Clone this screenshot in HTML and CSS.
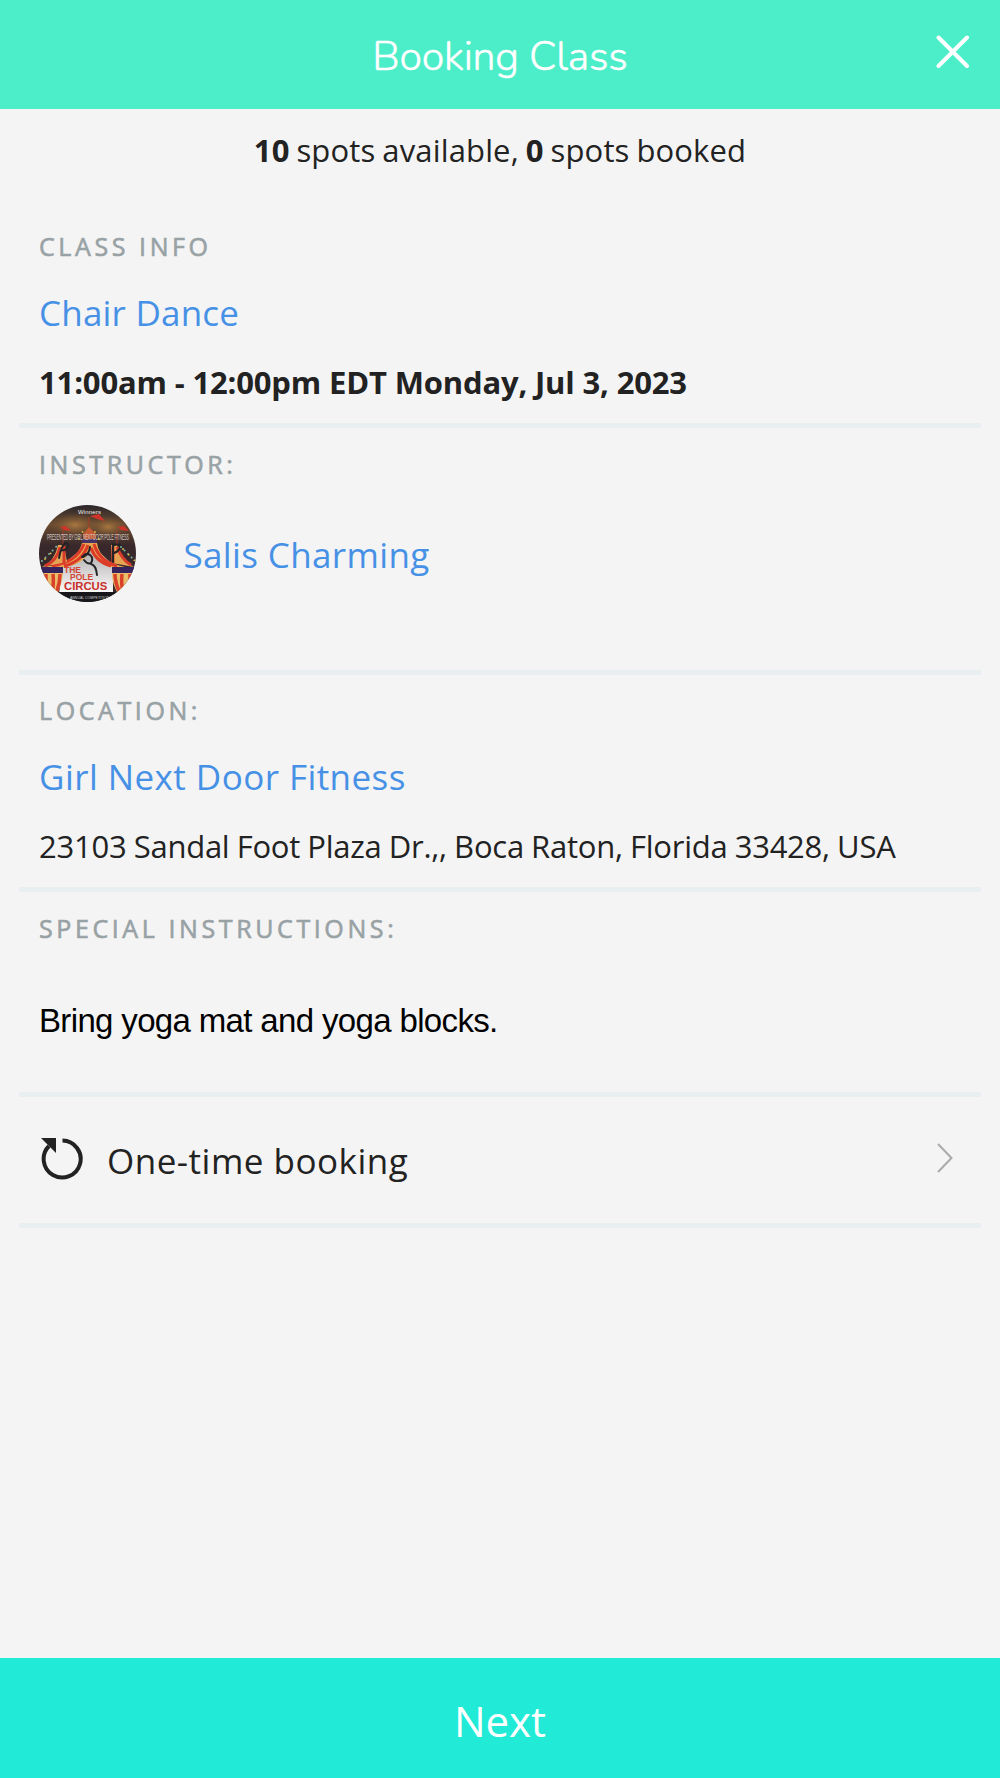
FILE: index.html
```html
<!DOCTYPE html>
<html lang="en">
<head>
<meta charset="utf-8">
<title>Booking Class</title>
<link rel="stylesheet" href="styles.css">
</head>
<body>
<div class="screen">
  <header class="topbar">
    <h1 class="title">Booking Class</h1>
    <svg class="close" viewBox="0 0 34 34"><path d="M2.500 2.500 31 31M31 2.500 2.500 31"/></svg>
  </header>
  <main class="content">
    <p class="spots"><b>10</b> spots available, <b>0</b> spots booked</p>
    <section class="section">
      <h2 class="label">CLASS INFO</h2>
      <a class="link chair">Chair Dance</a>
      <p class="date">11:00am - 12:00pm EDT Monday, Jul 3, 2023</p>
    </section>
    <section class="section instructor">
      <h2 class="label">INSTRUCTOR:</h2>
      <div class="person">
        <svg class="avatar" viewBox="0 0 97 97">
          <defs>
            <clipPath id="round"><circle cx="48.500" cy="48.500" r="48.500"/></clipPath>
            <linearGradient id="sky" x2="0" y2="1"><stop stop-color="#29252b"/><stop offset=".2" stop-color="#6b4c30"/><stop offset=".42" stop-color="#38282b"/></linearGradient>
            <radialGradient id="glow"><stop stop-color="#a8773f"/><stop offset="1" stop-color="#7b5535" stop-opacity="0"/></radialGradient>
            <linearGradient id="floor" x2="0" y2="1"><stop stop-color="#aaa5a6"/><stop offset="1" stop-color="#fff"/></linearGradient>
          </defs>
          <g clip-path="url(#round)">
            <path fill="url(#sky)" d="M0 0h97v97H0z"/>
            <ellipse cx="36" cy="20" rx="25" ry="12" fill="url(#glow)"/>
            <ellipse cx="69" cy="22" rx="20" ry="11" fill="url(#glow)"/>
            <path fill="#cf3329" d="m51 11 9-2 6 7-8-2zM21 22l6-1 5 5-7-1zM79 22l6-1 5 5-8-1z"/>
            <path stroke="#a33c2a" d="M50 12v12M24 25v14M78 25v14"/>
            <path fill="#c65a32" d="m44 29 6-7 7 7-1 9H45z"/>
            <path fill="#463264" d="M43 34h15v5H43z"/>
            <path fill="url(#floor)" d="M23 60 45 42h10l19 18v30H20z"/>
            <path fill="#e8a64e" d="M43 38h15q3 19 28 24H71Q58 58 51 46 44 59 27 62H4q34-4 39-24z"/>
            <path fill="none" stroke="#dc3b2a" stroke-width="3" d="M45 39Q38 57 13 61M49 40Q43 57 25 61M55 39q5 17 23 22M52 43q5 14 20 18"/>
            <path fill="#e5a453" d="M19 40h6l3 17L3 62q13-6 16-22zM72 40h6q4 16 17 22l-22-4z"/>
            <path fill="none" stroke="#d63b2c" stroke-width="3" d="M21 42Q18 56 6 61M25 41v17M74 41v17M78 42q5 13 14 18"/>
            <path fill="#37245f" d="M0 62h24v7H0zM73 62h24v7H73z"/>
            <path fill="#e9bd69" d="M4 68h20q-1 13-7 22H4zM73 68h20v22H80q-7-10-7-22z"/>
            <path fill="none" stroke="#d9412b" stroke-width="3.500" d="M7 69v20M14 69q1 9-1 20M21 69q0 8-3 17M76 69q0 8 4 17M83 69q-1 9 1 20M91 69v20"/>
            <path fill="none" stroke="#252326" stroke-width="2" stroke-linecap="round" d="M20 53q2-11 6-15 4 0 3 4-2 4-7 3M74 39v18M75 40q7-2 6 3-2 4-6 5"/>
            <path fill="none" stroke="#242226" stroke-width="2" stroke-linecap="round" d="M51 42q-1 8-7 10M43 52q4-5 8-2 4 3 1 8-3 2-7-3M52 59q5 1 6 11"/>
            <path fill="none" stroke="#72b7a9" stroke-width="2" stroke-linecap="round" stroke-dasharray="0 5" d="M3 56 19 40M82 42l14 14"/>
            <path fill="none" stroke="#dfc342" stroke-width="1.800" stroke-linecap="round" stroke-dasharray="0 8" d="M6 54 17 43M84 44l12 12M40 34l5-10M56 27l5 9"/>
            <text class="poster-small" x="39" y="9" textLength="23">Winners</text>
            <text class="poster-band" transform="translate(8 35) scale(1 2.300)" textLength="82">PRESENTED BY GIRL NEXT DOOR POLE FITNESS</text>
            <text class="poster-the" x="25" y="68">THE</text>
            <text class="poster-the" x="31" y="75">POLE</text>
            <text class="poster-circus" x="25" y="85">CIRCUS</text>
            <path fill="#17161a" d="M0 87h97v10H0z"/>
            <text class="poster-foot" x="31" y="93.500">ANNUAL COMPETITION</text>
          </g>
        </svg>
        <a class="link salis">Salis Charming</a>
      </div>
    </section>
    <section class="section location">
      <h2 class="label">LOCATION:</h2>
      <a class="link girl">Girl Next Door Fitness</a>
      <p class="address">23103 Sandal Foot Plaza Dr.,, Boca Raton, Florida 33428, USA</p>
    </section>
    <section class="section special">
      <h2 class="label">SPECIAL INSTRUCTIONS:</h2>
      <p class="note">Bring yoga mat and yoga blocks.</p>
    </section>
    <section class="section recurrence">
      <svg class="repeat" viewBox="0 0 42 42"><path class="ring" d="M21.500 2.500A18.500 18.500 0 1 1 8 8"/><path class="head" d="M0 0h15v15z"/></svg>
      <span class="once">One-time booking</span>
      <svg class="chevron" viewBox="0 0 16 30"><path d="M1 1 14.500 15 1 29"/></svg>
    </section>
  </main>
  <button class="next">Next</button>
</div>
</body>
</html>
```
FILE: styles.css
```css
* { box-sizing: border-box; }
body, h1, h2, p { margin: 0; }
body { background: #f4f4f4; font-family: "Open Sans", sans-serif; color: #222; }
.screen { display: flex; flex-direction: column; height: 1778px; }
.topbar { height: 109px; background: #4beec8; display: grid; grid-template-columns: 100px 1fr 100px; align-items: start; flex: none; }
.title { grid-column: 2; text-align: center; color: #fff; font: 300 41px/60px Nunito, "Open Sans", sans-serif; padding-top: 27px; letter-spacing: -.2px; -webkit-text-stroke: .5px #fff; }
.close { width: 34px; height: 34px; margin: 35px 0 0 36px; fill: none; stroke: #fff; stroke-width: 4; stroke-linecap: round; }
.content { flex: 1; padding: 0 19px; }
.spots { height: 83px; line-height: 83px; font-size: 31px; text-align: center; letter-spacing: .15px; word-spacing: -1.3px; white-space: nowrap; }
.section { border-bottom: 5px solid #e9eff1; padding: 17px 20px 0; height: 236px; white-space: nowrap; }
.section:first-of-type { padding-top: 35px; }
.label { font-size: 25px; font-weight: 400; line-height: 38px; margin-bottom: 2px; color: #98a2a5; letter-spacing: 3.6px; -webkit-text-stroke: .6px #98a2a5; }
.link { display: block; color: #4691e6; font-size: 35px; line-height: 60px; padding-top: 16px; }
.chair { letter-spacing: .2px; }
.salis { letter-spacing: .36px; }
.girl { letter-spacing: .44px; }
.date, .address { font-size: 31px; line-height: 50px; padding-top: 14px; }
.date { font-weight: 700; letter-spacing: -.16px; }
.address { letter-spacing: -.24px; word-spacing: -.6px; }
.person { display: flex; margin-top: 22px; height: 97px; align-items: center; gap: 48px; }
.person .link { padding: 2px 0 0; }
.avatar { width: 97px; height: 97px; margin-left: -.5px; font-family: "Liberation Sans", sans-serif; }
.poster-small { font-size: 6px; fill: #eee; }
.poster-band { font-size: 3.7px; fill: #d0c9c5; }
.poster-the { font-size: 8.5px; font-weight: 700; fill: #d34635; }
.poster-circus { font-size: 11.3px; font-weight: 700; fill: #c72f2b; }
.poster-foot { font-size: 3.5px; fill: #ccc; }
.instructor { height: 247px; }
.location { height: 217px; padding-top: 16px; }
.special { height: 205px; }
.note { color: #000; font: 33px/40px "Liberation Sans", Arial, sans-serif; padding-top: 52px; letter-spacing: -.65px; }
.recurrence { height: 131px; display: flex; align-items: flex-start; padding-top: 0; }
.repeat { width: 42px; height: 42px; margin: 41px 0 0 2px; }
.ring { fill: none; stroke: #222; stroke-width: 4; }
.head { fill: #222; }
.once { font-size: 35px; line-height: 60px; margin: 34px 0 0 24px; letter-spacing: .5px; }
.chevron { width: 16px; height: 30px; margin: 46px 8px 0 auto; fill: none; stroke: #aaa; stroke-width: 2; }
.next { flex: none; height: 120px; border: 0; background: #21ebd6; color: #fff; font: 42px/60px "Open Sans", sans-serif; padding: 5px 0 0; }
```
